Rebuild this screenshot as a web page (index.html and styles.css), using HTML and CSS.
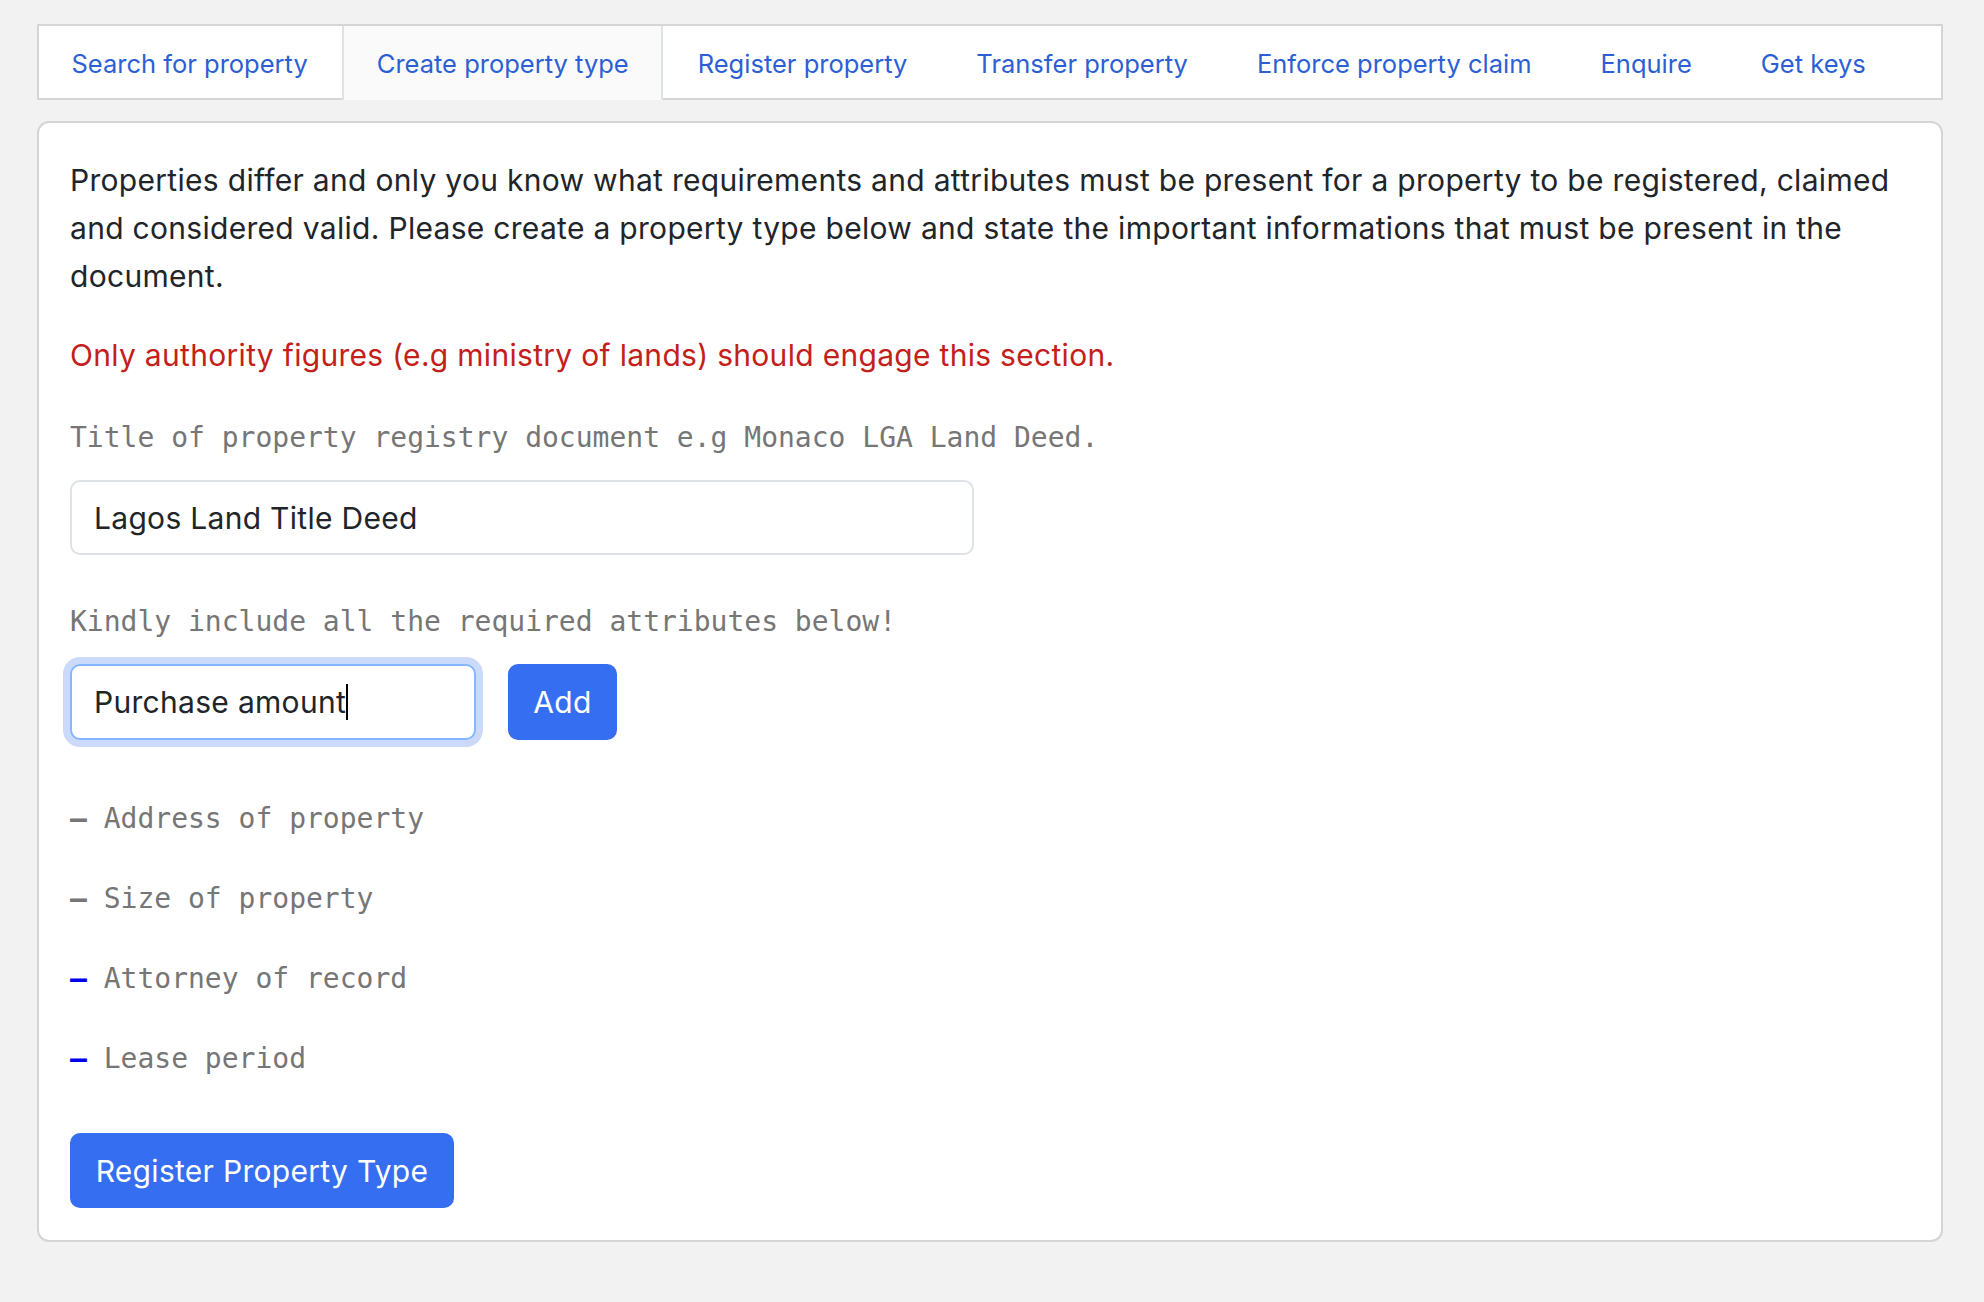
FILE: index.html
```html
<!DOCTYPE html>
<html lang="en">
<head>
<meta charset="utf-8">
<title>Create property type</title>
<link rel="stylesheet" href="styles.css">
</head>
<body>
<nav class="tabs">
  <a class="tab" href="#">Search for property</a>
  <a class="tab active" href="#">Create property type</a>
  <a class="tab" href="#">Register property</a>
  <a class="tab" href="#">Transfer property</a>
  <a class="tab" href="#">Enforce property claim</a>
  <a class="tab" href="#">Enquire</a>
  <a class="tab" href="#">Get keys</a>
</nav>
<main class="card">
  <p class="intro">Properties differ and only you know what requirements and attributes must be present for a property to be registered, claimed and considered valid. Please create a property type below and state the important informations that must be present in the document.</p>
  <p class="warning">Only authority figures (e.g ministry of lands) should engage this section.</p>
  <label class="mono-label" for="title">Title of property registry document e.g Monaco LGA Land Deed.</label>
  <input class="field field-title" id="title" type="text" value="Lagos Land Title Deed">
  <label class="mono-label label-attrs" for="attr">Kindly include all the required attributes below!</label>
  <div class="attr-row">
    <div class="field field-attr focused" id="attr"><span class="field-text">Purchase amount</span><span class="caret"></span></div>
    <button class="btn btn-add" type="button">Add</button>
  </div>
  <ul class="attr-list">
    <li><span class="dash">–</span> Address of property</li>
    <li><span class="dash">–</span> Size of property</li>
    <li><span class="dash dash-new">–</span> Attorney of record</li>
    <li><span class="dash dash-new">–</span> Lease period</li>
  </ul>
  <button class="btn btn-register" type="button">Register Property Type</button>
</main>
</body>
</html>
```
FILE: styles.css
```css
html, body {
  margin: 0;
  padding: 0;
}
body {
  background: #f2f2f2;
  font-family: Inter, "Liberation Sans", Arial, sans-serif;
  color: #212529;
  padding: 24px 41px 62px 37px;
}
.tabs {
  display: flex;
  height: 72px;
  background: #fff;
  border: 2px solid #d5d5d5;
}
.tab {
  display: flex;
  align-items: center;
  padding: 2px 34.5px 0;
  font-size: 25.5px;
  color: #2c5fd4;
  text-decoration: none;
  white-space: nowrap;
}
.tab:first-child {
  padding-left: 32.5px;
}
.tab.active {
  background: #fafafa;
  border-left: 2px solid #dee2e6;
  border-right: 2px solid #dee2e6;
  margin-bottom: -2px;
  padding: 0 32.5px;
}
.card {
  margin-top: 21px;
  background: #fff;
  border: 2px solid #d5d5d5;
  border-radius: 12px;
  padding: 33px 33px 32px 31px;
}
.intro,
.warning,
.field,
.btn {
  font-size: 30px;
  letter-spacing: 0.3px;
}
.intro {
  margin: 0;
  line-height: 48px;
}
.warning {
  margin: 31px 0 0;
  line-height: 48px;
  color: #c4201b;
}
.mono-label {
  display: block;
  margin-top: 38px;
  font-family: "DejaVu Sans Mono", "Liberation Mono", monospace;
  font-size: 28px;
  line-height: 42px;
  color: #767676;
}
.label-attrs {
  margin-top: 46px;
}
.field {
  box-sizing: border-box;
  display: block;
  height: 75px;
  border: 2px solid #dee2e6;
  border-radius: 10px;
  padding: 0 22px;
  font-family: Inter, "Liberation Sans", Arial, sans-serif;
  color: #212529;
  background: #fff;
  outline: none;
}
.field-title {
  margin-top: 21px;
  width: 904px;
}
.attr-row {
  display: flex;
  align-items: center;
  gap: 32px;
  margin-top: 21px;
}
.field-attr {
  width: 406px;
  height: 76px;
  display: flex;
  align-items: center;
}
.field.focused {
  border-color: #86b7fe;
  box-shadow: 0 0 0 7px #cbdafb;
}
.caret {
  display: inline-block;
  width: 2px;
  height: 36px;
  background: #000;
}
.btn {
  box-sizing: border-box;
  border: none;
  border-radius: 10px;
  background: #356ef0;
  color: #fff;
  font-family: Inter, "Liberation Sans", Arial, sans-serif;
  cursor: pointer;
}
.btn-add {
  height: 76px;
  width: 109px;
}
.attr-list {
  list-style: none;
  margin: 58px 0 0;
  padding: 0;
  font-family: "DejaVu Sans Mono", "Liberation Mono", monospace;
  font-size: 28px;
  line-height: 42px;
  color: #767676;
  display: flex;
  flex-direction: column;
  gap: 38px;
}
.dash {
  font-weight: bold;
}
.dash-new {
  color: #0000ee;
}
.btn-register {
  margin-top: 53px;
  height: 75px;
  width: 384px;
}
```
